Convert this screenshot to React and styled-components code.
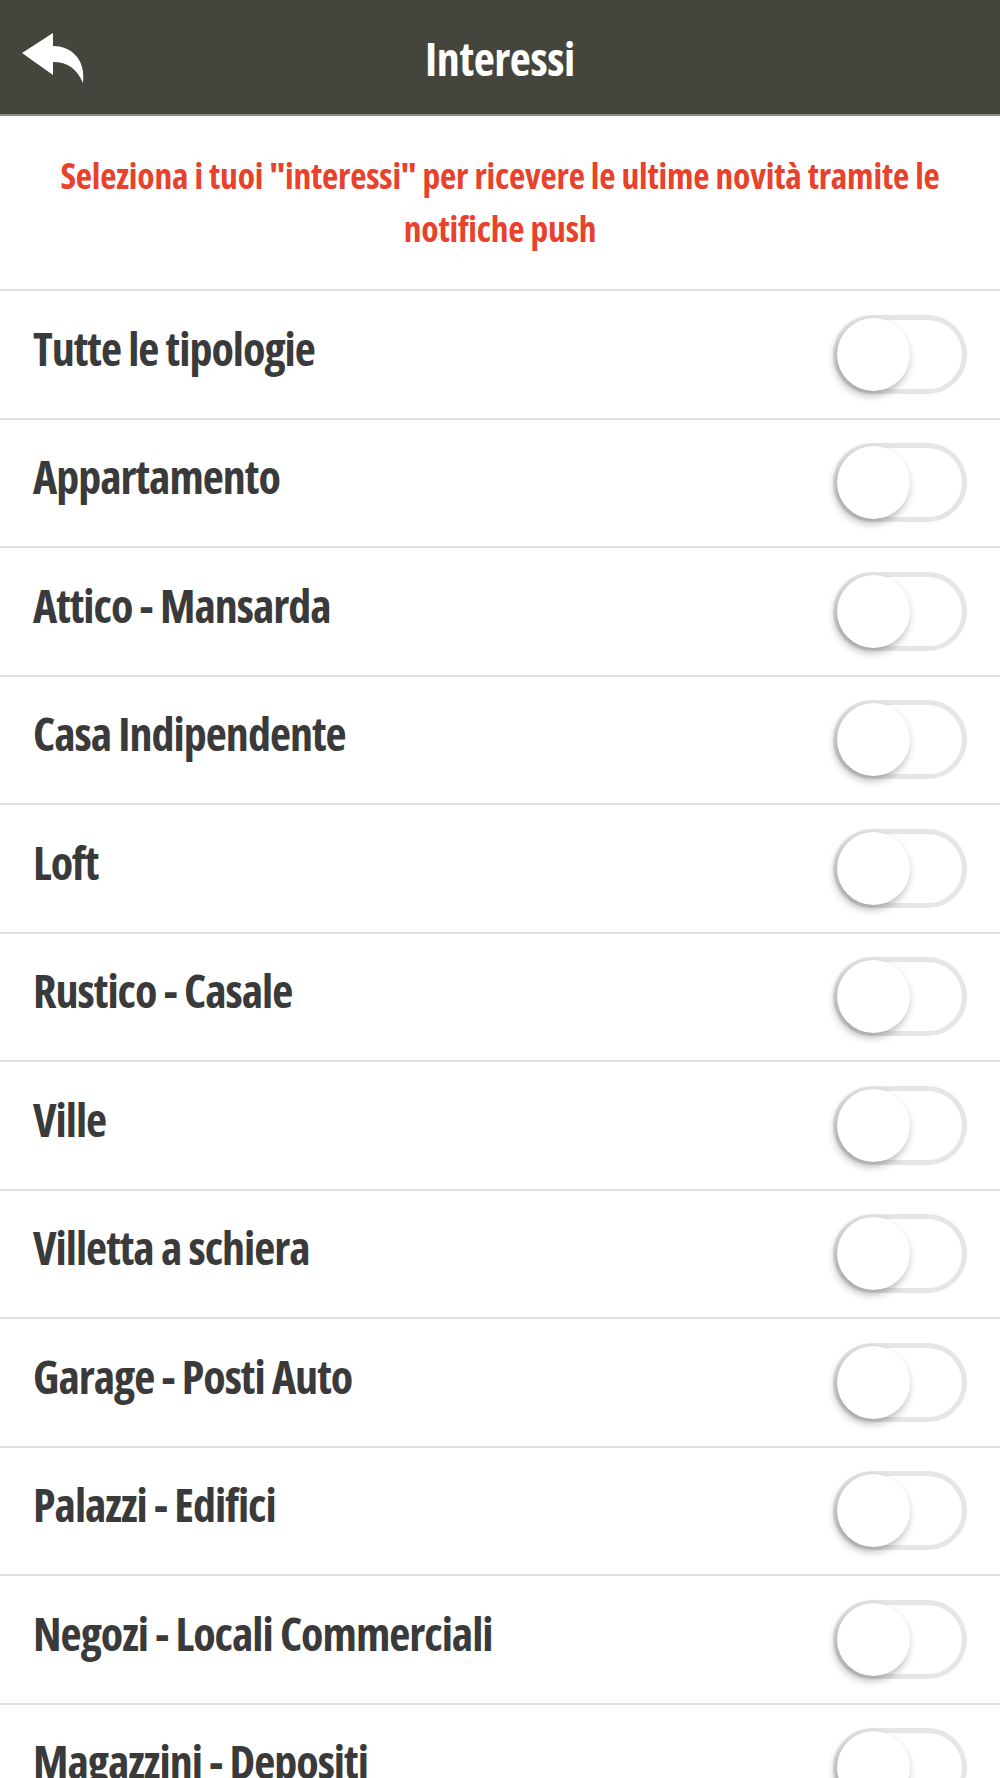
import React from 'react';
import styled, { createGlobalStyle } from 'styled-components';

const GlobalStyle = createGlobalStyle`
  html, body {
    margin: 0;
    padding: 0;
    background: #ffffff;
    overflow: hidden;
  }
  body {
    font-family: "Open Sans", "Roboto", "DejaVu Sans Condensed", sans-serif;
    font-stretch: 75%;
  }
`;

const colors = {
  header: '#45453d',
  red: '#e8412c',
  text: '#3a3a3a',
  line: '#dedede',
};

const Page = styled.div`
  width: 1000px;
  height: 1778px;
  overflow: hidden;
  background: #fff;
`;

const Header = styled.header`
  position: relative;
  height: 114px;
  background: ${colors.header};
  display: flex;
  align-items: center;
  justify-content: center;
  border-bottom: 2px solid #8a8a84;
`;

const BackButton = styled.button`
  position: absolute;
  left: 10px;
  top: 20px;
  width: 90px;
  height: 75px;
  padding: 0;
  border: none;
  background: transparent;
  cursor: pointer;
`;

const Title = styled.h1`
  margin: 0;
  padding-top: 2px;
  color: #fff;
  font-size: 46px;
  font-weight: 700;
  font-stretch: 75%;
  letter-spacing: -0.4px;
`;

const Intro = styled.p`
  margin: 0;
  padding: 33px 40px 34px;
  text-align: center;
  color: ${colors.red};
  font-size: 35.5px;
  font-weight: 700;
  font-stretch: 75%;
  line-height: 53px;
  letter-spacing: -0.2px;
`;

const List = styled.ul`
  margin: 0;
  padding: 0;
  list-style: none;
`;

const Row = styled.li`
  height: 126.5px;
  border-top: 2px solid ${colors.line};
  padding: 0 33px;
  display: flex;
  align-items: center;
  justify-content: space-between;
`;

const Label = styled.span`
  padding-bottom: 13px;
  color: ${colors.text};
  font-size: 46px;
  font-weight: 700;
  font-stretch: 75%;
  letter-spacing: -1px;
`;

const Track = styled.button`
  position: relative;
  width: 134px;
  height: 79px;
  padding: 0;
  box-sizing: border-box;
  border: 5px solid #e6e6e6;
  border-radius: 40px;
  background: ${p => (p.$on ? '#e8412c' : '#fff')};
  cursor: pointer;
`;

const Knob = styled.span`
  position: absolute;
  top: -2px;
  left: ${p => (p.$on ? '54px' : '-1px')};
  width: 73px;
  height: 73px;
  border-radius: 50%;
  background: #fff;
  box-shadow: -2px 4px 8px rgba(0, 0, 0, 0.32);
`;

const BackIcon = () => (
  <svg width="90" height="75" viewBox="0 0 90 75">
    <path
      d="M12 33 L43 13 L43 26 C60 26 76 38 73 63 C67 49 58 42 43 42 L43 55 Z"
      fill="#fff"
    />
  </svg>
);

const Toggle = ({ on }) => (
  <Track $on={on} aria-pressed={on}>
    <Knob $on={on} />
  </Track>
);

const interests = [
  'Tutte le tipologie',
  'Appartamento',
  'Attico - Mansarda',
  'Casa Indipendente',
  'Loft',
  'Rustico - Casale',
  'Ville',
  'Villetta a schiera',
  'Garage - Posti Auto',
  'Palazzi - Edifici',
  'Negozi - Locali Commerciali',
  'Magazzini - Depositi',
];

const App = () => (
  <Page>
    <GlobalStyle />
    <Header>
      <BackButton aria-label="Indietro">
        <BackIcon />
      </BackButton>
      <Title>Interessi</Title>
    </Header>
    <Intro>
      Seleziona i tuoi "interessi" per ricevere le ultime novità tramite le notifiche push
    </Intro>
    <List>
      {interests.map(name => (
        <Row key={name}>
          <Label>{name}</Label>
          <Toggle on={false} />
        </Row>
      ))}
    </List>
  </Page>
);

export default App;
